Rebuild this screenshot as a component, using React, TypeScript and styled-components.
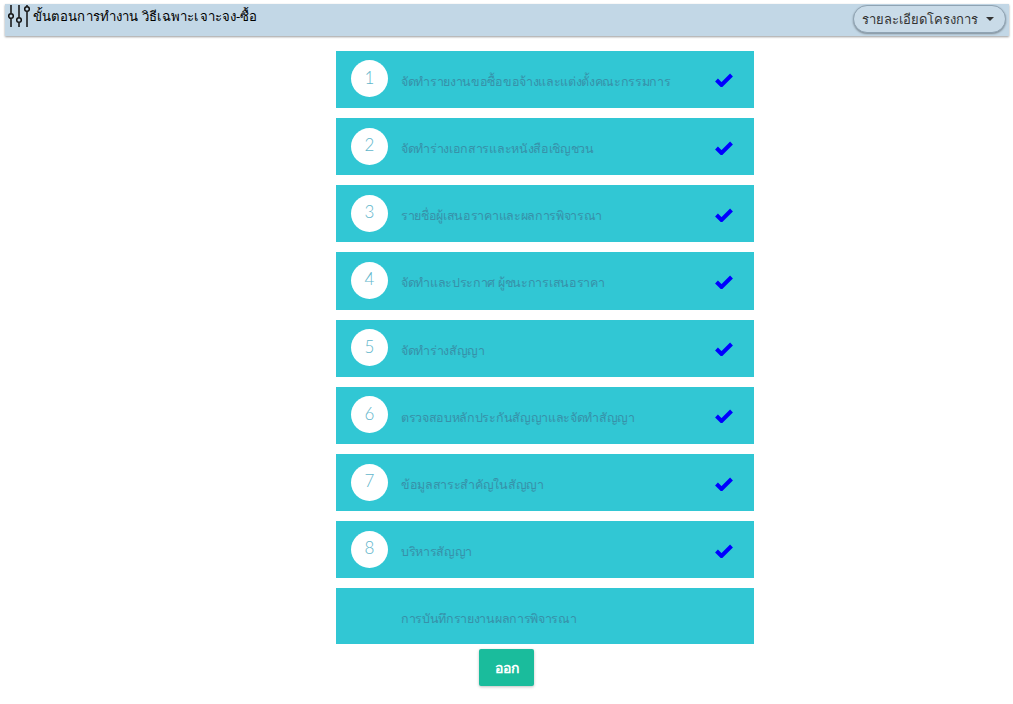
import React from "react";
import styled, { createGlobalStyle } from "styled-components";

const GlobalStyle = createGlobalStyle`
  html, body {
    margin: 0;
    padding: 0;
    background: #fff;
    font-family: "Noto Sans", "Liberation Sans", Tahoma, sans-serif;
  }
`;

const Page = styled.div`
  width: 1013px;
  height: 704px;
  padding: 4px 4px 0 5px;
  box-sizing: border-box;
  overflow: hidden;
`;

const Header = styled.div`
  height: 32px;
  background: #c2d7e6;
  box-shadow: 0 1px 2px rgba(0, 0, 0, 0.4);
  display: flex;
  align-items: flex-start;
  justify-content: space-between;
  padding: 0 3px 0 2px;
`;

const Title = styled.div`
  display: flex;
  align-items: center;
  gap: 2px;
  height: 24px;
  font-size: 13.2px;
  letter-spacing: 0.1px;
  color: #000;
`;

const DetailButton = styled.button`
  height: 28px;
  margin-top: 1px;
  width: 153px;
  border: 1px solid #8fa3b3;
  border-radius: 14px;
  background: #c9dbe8;
  box-shadow: 0 1px 2px rgba(0, 0, 0, 0.35);
  color: #333;
  font-family: inherit;
  font-size: 13px;
  display: flex;
  align-items: center;
  justify-content: center;
  gap: 8px;
  padding: 0 3px 0 0;
`;

const Caret = styled.span`
  width: 0;
  height: 0;
  border-left: 4.5px solid transparent;
  border-right: 4.5px solid transparent;
  border-top: 4.5px solid #333;
`;

const List = styled.div`
  width: 418px;
  margin: 14.8px 0 0 331px;
  display: flex;
  flex-direction: column;
  gap: 10px;
`;

const Row = styled.div<{ $last?: boolean }>`
  height: ${(p) => (p.$last ? "56px" : "57.2px")};
  background: #31c7d4;
  display: flex;
  align-items: center;
  padding: 0 21px 0 15px;
  box-sizing: border-box;
`;

const Circle = styled.div`
  width: 37px;
  height: 37px;
  border-radius: 50%;
  background: #fff;
  color: #62b6cb;
  font-size: 17px;
  font-family: Lato, sans-serif;
  font-weight: 300;
  display: flex;
  align-items: center;
  justify-content: center;
  flex: none;
  margin-top: -1px;
  padding-bottom: 3px;
  box-sizing: border-box;
`;

const Spacer = styled.div`
  width: 37px;
  flex: none;
`;

const Label = styled.div`
  flex: 1;
  margin-left: 13px;
  padding-top: 5px;
  font-size: 12.5px;
  letter-spacing: -0.32px;
  color: #3791a9;
`;

const CheckMark = styled.svg`
  flex: none;
  margin-top: 2px;
`;

const ExitButton = styled.button`
  display: block;
  width: 55px;
  height: 37px;
  margin: 5px 0 0 474px;
  border: 0;
  border-radius: 2px;
  background: #1abc9c;
  box-shadow: 0 1px 3px rgba(0, 0, 0, 0.25);
  color: #fff;
  font-family: inherit;
  font-size: 14px;
  font-weight: 700;
  padding: 0;
`;

const steps = [
  "จัดทำรายงานขอซื้อขอจ้างและแต่งตั้งคณะกรรมการ",
  "จัดทำร่างเอกสารและหนังสือเชิญชวน",
  "รายชื่อผู้เสนอราคาและผลการพิจารณา",
  "จัดทำและประกาศ ผู้ชนะการเสนอราคา",
  "จัดทำร่างสัญญา",
  "ตรวจสอบหลักประกันสัญญาและจัดทำสัญญา",
  "ข้อมูลสาระสำคัญในสัญญา",
  "บริหารสัญญา",
];

function SlidersIcon() {
  return (
    <svg width="24" height="24" viewBox="0 0 24 24" fill="none" stroke="#111" strokeWidth="1.5">
      <path d="M4 1v8M4 15v8M12 1v12M12 19v4M20 1v1M20 8v15" />
      <circle cx="4" cy="12" r="2.3" />
      <circle cx="12" cy="16" r="2.3" />
      <circle cx="20" cy="5" r="2.3" />
    </svg>
  );
}

function Check() {
  return (
    <CheckMark width="18" height="14" viewBox="0 0 18 14">
      <path d="M1.5 7L6.5 12L16.5 2" fill="none" stroke="#0000ff" strokeWidth="4" />
    </CheckMark>
  );
}

export default function App() {
  return (
    <Page>
      <GlobalStyle />
      <Header>
        <Title>
          <SlidersIcon />
          <span>ขั้นตอนการทำงาน วิธีเฉพาะเจาะจง-ซื้อ</span>
        </Title>
        <DetailButton>
          รายละเอียดโครงการ
          <Caret />
        </DetailButton>
      </Header>
      <List>
        {steps.map((s, i) => (
          <Row key={s}>
            <Circle>{i + 1}</Circle>
            <Label>{s}</Label>
            <Check />
          </Row>
        ))}
        <Row $last>
          <Spacer />
          <Label>การบันทึกรายงานผลการพิจารณา</Label>
        </Row>
      </List>
      <ExitButton>ออก</ExitButton>
    </Page>
  );
}
